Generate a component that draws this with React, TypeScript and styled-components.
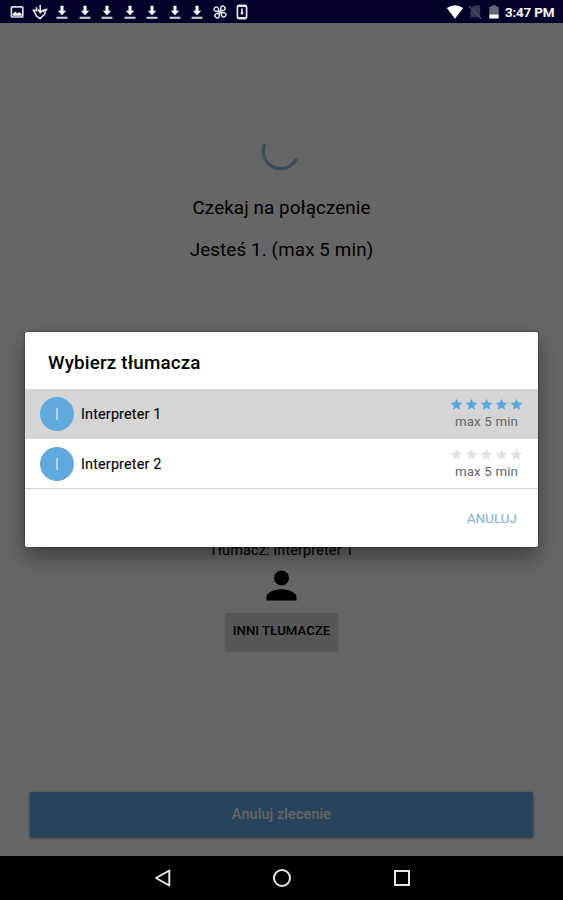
import React from "react";
import styled, { createGlobalStyle } from "styled-components";

const GlobalStyle = createGlobalStyle`
  * { box-sizing: border-box; }
  body { margin: 0; background: #000; font-family: Roboto, "Liberation Sans", sans-serif; }
`;

const Screen = styled.div`
  position: relative;
  width: 563px;
  height: 900px;
  display: flex;
  flex-direction: column;
  overflow: hidden;
`;

const StatusBar = styled.header`
  height: 23px;
  flex: none;
  display: flex;
  justify-content: space-between;
  align-items: center;
  padding: 1px 6px 0 8px;
  background: #00002a;
  color: #fff;
`;

const StatusIcons = styled.div`
  display: flex;
  align-items: center;
  gap: 4.5px;
`;

const SystemIcons = styled.div`
  display: flex;
  align-items: center;
`;

const Glyph = styled.svg<{ $size?: number }>`
  display: block;
  flex: none;
  width: ${({ $size = 18 }) => $size}px;
  height: ${({ $size = 18 }) => $size}px;
  overflow: visible;
`;

const Clock = styled.span`
  margin-left: 2px;
  width: 52px;
  font-size: 13.5px;
  font-weight: 500;
  line-height: 18px;
  letter-spacing: -0.12px;
  white-space: nowrap;
  -webkit-text-stroke: 0.2px #fff;
`;

const Content = styled.main`
  position: relative;
  height: 833px;
  flex: none;
  display: flex;
  flex-direction: column;
  align-items: center;
  padding: 106px 30px 19px;
  background: #fff;
  color: #000;
`;

const Message = styled.p<{ $top: number; $spacing: number }>`
  margin: ${({ $top }) => $top}px 0 0;
  font-size: 18.8px;
  line-height: 24px;
  letter-spacing: ${({ $spacing }) => $spacing}px;
  white-space: nowrap;
`;

const Selected = styled.div`
  margin-top: 279px;
  display: flex;
  flex-direction: column;
  align-items: center;
`;

const SelectedName = styled.p`
  margin: 0 0 2px;
  font-size: 14.4px;
  line-height: 20px;
  letter-spacing: 0.15px;
`;

const OthersButton = styled.button`
  margin: 5px 0 0;
  width: 113px;
  height: 38px;
  padding: 0 0 2px;
  border: 0;
  border-radius: 2px;
  background: #d6d6d6;
  color: #000;
  font: 500 13.2px/18px Roboto, sans-serif;
  letter-spacing: 0;
  white-space: nowrap;
  box-shadow: 0 1px 2px rgba(0, 0, 0, 0.2);
`;

const CancelOrder = styled.button`
  margin-top: auto;
  width: 503px;
  height: 45px;
  padding: 0;
  border: 0;
  background: #62abe5;
  color: #fff;
  font: 500 14.4px/20px Roboto, sans-serif;
  letter-spacing: 0.12px;
  box-shadow: 0 1px 3px rgba(0, 0, 0, 0.55);
`;

const Scrim = styled.div`
  position: absolute;
  inset: 0;
  background: rgba(0, 0, 0, 0.6);
`;

const Dialog = styled.section`
  position: absolute;
  left: 25px;
  top: 309px;
  width: 513px;
  height: 215px;
  display: flex;
  flex-direction: column;
  background: #fff;
  border-radius: 2px;
  box-shadow: 0 0 2px rgba(0, 0, 0, 0.65), 0 10px 22px rgba(0, 0, 0, 0.4);
`;

const DialogTitle = styled.h1`
  margin: 0;
  height: 57px;
  padding: 4px 23px 0;
  font-size: 18.8px;
  font-weight: 500;
  line-height: 54px;
  letter-spacing: 0.17px;
`;

const Option = styled.div<{ $active?: boolean }>`
  height: 50px;
  display: flex;
  align-items: center;
  padding: 0 15px;
  background: ${({ $active }) => ($active ? "#d5d5d5" : "#fff")};
`;

const Avatar = styled.span`
  width: 34px;
  height: 34px;
  display: flex;
  align-items: center;
  justify-content: center;
  border-radius: 50%;
  background: #5fa9dc;
  color: #c5e2f6;
  font-size: 16px;
`;

const OptionName = styled.span`
  flex: 1;
  margin-left: 7px;
  padding-top: 1px;
  font-size: 14.4px;
  letter-spacing: 0.16px;
  color: #080808;
  -webkit-text-stroke: 0.15px #080808;
`;

const Rating = styled.div`
  width: 73px;
  display: flex;
  flex-direction: column;
  align-items: center;
`;

const Stars = styled.div<{ $filled: boolean }>`
  display: flex;
  gap: 1.8px;
  color: ${({ $filled }) => ($filled ? "#55a5df" : "#e2e2e2")};
`;

const Wait = styled.span`
  margin-top: 1px;
  font-size: 13.3px;
  line-height: 19px;
  letter-spacing: 0.15px;
  color: #666;
  white-space: nowrap;
`;

const Actions = styled.div`
  flex: 1;
  display: flex;
  justify-content: flex-end;
  align-items: center;
  padding: 1px 21px 0 0;
  border-top: 1px solid #d2d2d2;
  margin-top: -1px;
`;

const TextButton = styled.button`
  border: 0;
  padding: 0;
  background: none;
  color: #86b5d3;
  font: 400 13.2px/18px Roboto, sans-serif;
  letter-spacing: 0.15px;
  -webkit-text-stroke: 0.2px #86b5d3;
`;

const NavBar = styled.nav`
  flex: 1;
  display: grid;
  grid-template-columns: repeat(3, 120px);
  justify-content: center;
  justify-items: center;
  align-items: center;
  background: #000;
  color: #e6e6e6;
`;

const PictureIcon = () => (
  <Glyph viewBox="0 0 18 18">
    <rect x="3.4" y="3.8" width="11.4" height="10.2" rx="0.8" fill="none" stroke="#ddd" strokeWidth="1.7" />
    <path d="M4.7 12.7V11L7.2 8.5l2 2 2.2-1.6 2.2 2v1.8Z" fill="#fff" />
  </Glyph>
);

const HandArrowIcon = () => (
  <Glyph viewBox="0 0 18 18" fill="none" stroke="#e8e8e8" strokeWidth="1.6" strokeLinejoin="round">
    <path d="M9.2 2v7.5M6.8 6.6l2.4 3.2L11.8 7" />
    <path d="M5.5 4.2v3.6L2.2 7l2.2 3.6 1 2.3 3.6 2.7 4.8-4.6.2-2.4 1.7-2.4-2.9.8-1 1.8" />
  </Glyph>
);

const DownloadIcon = () => (
  <Glyph viewBox="0 0 18 18">
    <path d="M7.5 2.8h3v5h2.7L9 12.2 4.8 7.8h2.7Z" fill="#fff" />
    <path d="M3.5 14.8h11" stroke="#c4c4ca" strokeWidth="2.2" />
  </Glyph>
);

const PinwheelIcon = () => (
  <Glyph viewBox="0 0 18 18" fill="none" stroke="#e6e6e6" strokeWidth="1.5" strokeLinejoin="round">
    {[0, 90, 180, 270].map((angle) => (
      <path key={angle} transform={`rotate(${angle + 12} 9 9)`} d="M9 9V3.7Q9.3 2.4 11 2.6q2.5.4 2.2 2.6-.2 1.6-2 1.9L9 7.4" />
    ))}
  </Glyph>
);

const PhoneDownloadIcon = () => (
  <Glyph viewBox="0 0 18 18">
    <rect x="4.4" y="2.4" width="9.2" height="13.2" rx="1.5" fill="none" stroke="#e4e4e4" strokeWidth="1.7" />
    <path d="M5 3.5h8M5 14.5h8" stroke="#e4e4e4" strokeWidth="1.2" />
    <path d="M9 5.5v5" stroke="#fff" strokeWidth="1.5" />
    <path d="m7.1 9.5 1.9 2.5 1.9-2.5Z" fill="#fff" />
  </Glyph>
);

const Star = () => (
  <Glyph $size={13} viewBox="0 0 24 24" fill="currentColor">
    <path d="m12 17.8 6.7 4-1.8-7.6 5.9-5.1-7.8-.7L12 1.3l-3 7.1-7.8.7 5.9 5.1-1.8 7.6Z" />
  </Glyph>
);

const interpreters = [
  { name: "Interpreter 1", filled: true },
  { name: "Interpreter 2", filled: false },
];

export default function App() {
  return (
    <>
      <GlobalStyle />
      <Screen>
        <StatusBar>
          <StatusIcons>
            <PictureIcon />
            <HandArrowIcon />
            {Array.from({ length: 7 }, (_, i) => <DownloadIcon key={i} />)}
            <PinwheelIcon />
            <PhoneDownloadIcon />
          </StatusIcons>
          <SystemIcons>
            <Glyph $size={20} viewBox="0 0 20 20">
              <path d="M1.8 6Q10 .4 18.2 6L10 16.7Z" fill="#fff" />
            </Glyph>
            <Glyph $size={20} viewBox="0 0 20 20">
              <path d="M6 6 9 3.5h6.2v11M5.3 7v8.5h9Z" fill="#33344f" />
              <path d="m4 4 12 12.5" stroke="#51526a" strokeWidth="1.5" />
            </Glyph>
            <Glyph $size={18} viewBox="0 0 18 18">
              <path d="M4.3 3.8h2.3V2.2h4.8v1.6h2.3v8H4.3Z" fill="#666779" />
              <path d="M4.3 11.5h9.4v4H4.3Z" fill="#fff" />
            </Glyph>
            <Clock>3:47 PM</Clock>
          </SystemIcons>
        </StatusBar>
        <Content>
          <Glyph $size={40} viewBox="0 0 40 40" fill="none">
            <path d="M3 14.7A17.3 17.3 0 0 0 34.4 29.8" stroke="#8ebfdc" strokeWidth="3.2" />
          </Glyph>
          <Message $top={27} $spacing={0.1}>Czekaj na połączenie</Message>
          <Message $top={18} $spacing={0.13}>Jesteś 1. (max 5 min)</Message>
          <Selected>
            <SelectedName>Tłumacz: Interpreter 1</SelectedName>
            <Glyph $size={45} viewBox="0 0 24 24">
              <path d="M12 12a4 4 0 1 0 0-8 4 4 0 0 0 0 8Zm0 2c-2.7 0-8 1.3-8 4v2h16v-2c0-2.7-5.3-4-8-4Z" />
            </Glyph>
            <OthersButton>INNI TŁUMACZE</OthersButton>
          </Selected>
          <CancelOrder>Anuluj zlecenie</CancelOrder>
          <Scrim />
          <Dialog role="dialog">
            <DialogTitle>Wybierz tłumacza</DialogTitle>
            {interpreters.map(({ name, filled }) => (
              <Option key={name} $active={filled}>
                <Avatar>I</Avatar>
                <OptionName>{name}</OptionName>
                <Rating>
                  <Stars $filled={filled}>
                    {Array.from({ length: 5 }, (_, i) => <Star key={i} />)}
                  </Stars>
                  <Wait>max 5 min</Wait>
                </Rating>
              </Option>
            ))}
            <Actions>
              <TextButton>ANULUJ</TextButton>
            </Actions>
          </Dialog>
        </Content>
        <NavBar>
          <Glyph $size={20} viewBox="0 0 20 20" fill="none" stroke="currentColor" strokeWidth="2">
            <path d="M17.3 2.5v15L4 10Z" strokeLinejoin="round" />
          </Glyph>
          <Glyph $size={20} viewBox="0 0 20 20" fill="none" stroke="currentColor" strokeWidth="2">
            <circle cx="10" cy="10" r="8" />
          </Glyph>
          <Glyph $size={20} viewBox="0 0 20 20" fill="none" stroke="currentColor" strokeWidth="2">
            <rect x="3" y="3" width="14" height="14" />
          </Glyph>
        </NavBar>
      </Screen>
    </>
  );
}
